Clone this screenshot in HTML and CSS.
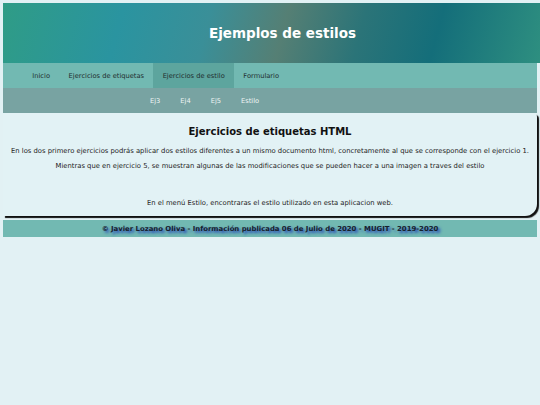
FILE: index.html
```html
<!DOCTYPE html>
<html lang="es">
<head>
<meta charset="utf-8">
<title>Ejemplos de estilos</title>
<link rel="stylesheet" href="styles.css">
</head>
<body>
<header class="cabecera">
  <h1 class="titulo">Ejemplos de estilos</h1>
</header>
<nav class="menu">
  <a class="menu-item" href="#">Inicio</a>
  <a class="menu-item" href="#">Ejercicios de etiquetas</a>
  <a class="menu-item activo" href="#">Ejercicios de estilo</a>
  <a class="menu-item" href="#">Formulario</a>
</nav>
<nav class="submenu">
  <a class="submenu-item" href="#">Ej3</a>
  <a class="submenu-item" href="#">Ej4</a>
  <a class="submenu-item" href="#">Ej5</a>
  <a class="submenu-item" href="#">Estilo</a>
</nav>
<main class="contenido">
  <h2 class="subtitulo">Ejercicios de etiquetas HTML</h2>
  <p class="parrafo">En los dos primero ejercicios podrás aplicar dos estilos diferentes a un mismo documento html, concretamente al que se corresponde con el ejercicio 1.</p>
  <p class="parrafo">Mientras que en ejercicio 5, se muestran algunas de las modificaciones que se pueden hacer a una imagen a traves del estilo</p>
  <p class="parrafo separado">En el menú Estilo, encontraras el estilo utilizado en esta aplicacion web.</p>
</main>
<footer class="pie">© Javier Lozano Oliva - Información publicada 06 de Julio de 2020 - MUGIT - 2019-2020</footer>
</body>
</html>
```

FILE: styles.css
```css
html, body {
  margin: 0;
  padding: 0;
}
body {
  background: #e2f1f4;
  font-family: "DejaVu Sans", Verdana, sans-serif;
  padding: 3px 3px 0 3px;
}
.cabecera {
  height: 60px;
  margin-right: -3px;
  display: flex;
  align-items: center;
  justify-content: center;
  padding-left: 22px;
  background: linear-gradient(105deg, #2f9c86 0%, #2a94a0 22%, #3a8f98 38%, #557f74 52%, #2b7478 66%, #146e7a 80%, #2e8f80 100%);
}
.titulo {
  margin: 0;
  color: #ffffff;
  font-size: 13.5px;
  font-weight: bold;
}
.menu {
  height: 25px;
  display: flex;
  align-items: stretch;
  padding-left: 20px;
  background: #72b9b2;
}
.menu-item {
  display: flex;
  align-items: center;
  padding: 0 9.3px;
  color: #1f2f2f;
  text-decoration: none;
  font-size: 6.7px;
}
.menu-item.activo {
  background: #5da59e;
}
.submenu {
  height: 25px;
  display: flex;
  align-items: center;
  padding-left: 137px;
  background: #78a3a2;
}
.submenu-item {
  padding: 0 10px;
  color: #eef5f5;
  text-decoration: none;
  font-size: 6.7px;
}
.contenido {
  background: #e2f2f5;
  border-bottom-right-radius: 12px;
  border-top-right-radius: 4px;
  box-shadow: 2px 2px 1px #111;
  padding: 13px 4px 9px 4px;
  text-align: center;
  color: #222;
}
.subtitulo {
  margin: 0 0 10px 0;
  font-size: 10px;
  font-weight: bold;
  color: #111;
}
.parrafo {
  margin: 0 0 7px 0;
  font-size: 6.8px;
  line-height: 8px;
}
.separado {
  margin-top: 29px;
  margin-bottom: 0;
}
.pie {
  margin-top: 4px;
  height: 17px;
  display: flex;
  align-items: center;
  justify-content: center;
  background: #72b9b2;
  color: #17202c;
  font-size: 6.9px;
  font-weight: bold;
  text-shadow: 2px 2px 3px #1a36b8;
}
```
